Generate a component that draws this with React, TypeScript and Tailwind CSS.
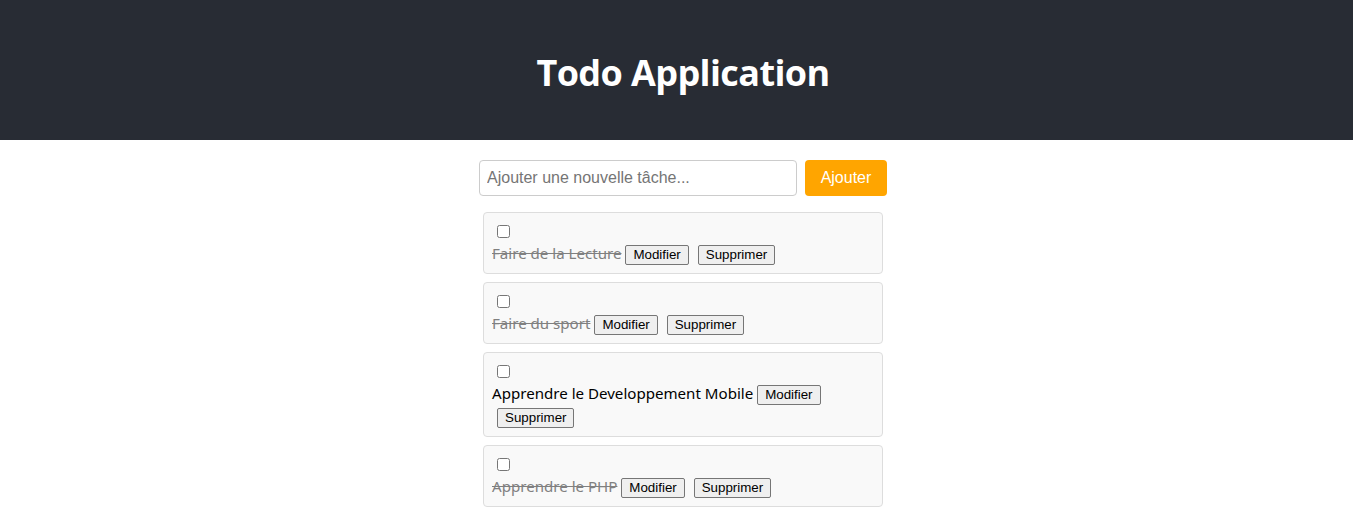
import React, { useState } from 'react';

type Todo = { id: number; text: string; done: boolean };

const initial: Todo[] = [
  { id: 1, text: 'Faire de la Lecture', done: true },
  { id: 2, text: 'Faire du sport', done: true },
  { id: 3, text: 'Apprendre le Developpement Mobile', done: false },
  { id: 4, text: 'Apprendre le PHP', done: true },
];

const btn =
  "px-[7px] h-[20px] align-middle bg-[#efefef] border border-[#767676] rounded-[2px] text-[13.33px] text-black font-['Liberation_Sans',Arial,sans-serif] leading-none";

export default function App() {
  const [todos] = useState<Todo[]>(initial);

  return (
    <div className="min-h-screen bg-white font-['Noto_Sans',sans-serif]">
      <header className="h-[140px] bg-[#282c34] flex items-center justify-center pl-[13px]">
        <h1 className="text-white text-[36px] font-bold font-['Open_Sans',sans-serif] tracking-[-0.6px] pt-[5px]">
          Todo Application
        </h1>
      </header>

      <main className="flex flex-col items-center pl-[13px] pt-[20px]">
        <div className="flex gap-2">
          <input
            placeholder="Ajouter une nouvelle tâche..."
            className="w-[318px] h-[36px] px-[7px] border border-[#ccc] rounded-[4px] text-[16px] font-['Liberation_Sans',Arial,sans-serif] placeholder:text-[#757575] outline-none"
          />
          <button className="w-[82px] h-[36px] bg-[#ffa500] text-white rounded-[4px] text-[16px] font-['Liberation_Sans',Arial,sans-serif]">
            Ajouter
          </button>
        </div>

        <ul className="mt-4 flex flex-col gap-2 w-[400px]">
          {todos.map((t) => (
            <li key={t.id} className="bg-[#f9f9f9] border border-[#ddd] rounded-[4px] px-[8px] pt-[9px] pb-[8px]">
              <div className="h-[20px] leading-none">
                <input type="checkbox" className="ml-[5px] mt-[3px] w-[13px] h-[13px]" />
              </div>
              <div className="text-[15.1px] leading-[23px]">
                <span className={t.done ? 'line-through text-[#808080]' : 'text-black'}>{t.text}</span>{' '}
                <button className={btn}>Modifier</button>{' '}
                <button className={`${btn} ml-[5px]`}>Supprimer</button>
              </div>
            </li>
          ))}
        </ul>
      </main>
    </div>
  );
}
